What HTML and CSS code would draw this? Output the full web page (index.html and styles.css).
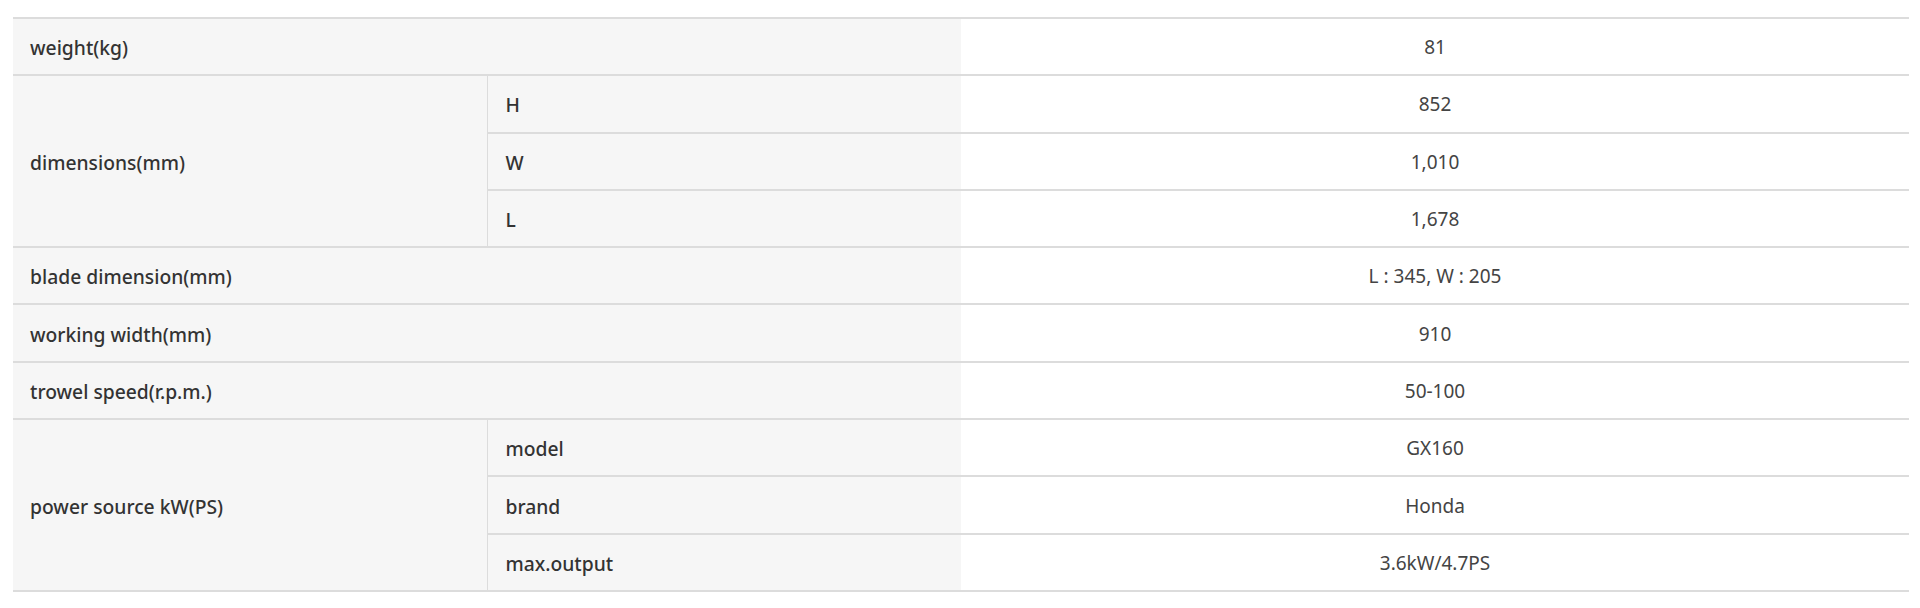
FILE: index.html
```html
<!DOCTYPE html>
<html lang="en">
<head>
<meta charset="utf-8">
<title>Specifications</title>
<link rel="stylesheet" href="styles.css">
</head>
<body>
<div class="spec-wrap">
  <table class="spec">
    <colgroup>
      <col class="c"><col class="c"><col class="c"><col class="c">
    </colgroup>
    <tbody>
      <tr>
        <th class="lbl" colspan="2">weight(kg)</th>
        <td class="val" colspan="2">81</td>
      </tr>
      <tr>
        <th class="lbl" rowspan="3">dimensions(mm)</th>
        <th class="sub">H</th>
        <td class="val" colspan="2">852</td>
      </tr>
      <tr>
        <th class="sub">W</th>
        <td class="val" colspan="2">1,010</td>
      </tr>
      <tr>
        <th class="sub">L</th>
        <td class="val" colspan="2">1,678</td>
      </tr>
      <tr>
        <th class="lbl" colspan="2">blade dimension(mm)</th>
        <td class="val" colspan="2">L : 345, W : 205</td>
      </tr>
      <tr>
        <th class="lbl" colspan="2">working width(mm)</th>
        <td class="val" colspan="2">910</td>
      </tr>
      <tr>
        <th class="lbl" colspan="2">trowel speed(r.p.m.)</th>
        <td class="val" colspan="2">50-100</td>
      </tr>
      <tr>
        <th class="lbl" rowspan="3">power source kW(PS)</th>
        <th class="sub">model</th>
        <td class="val" colspan="2">GX160</td>
      </tr>
      <tr>
        <th class="sub">brand</th>
        <td class="val" colspan="2">Honda</td>
      </tr>
      <tr>
        <th class="sub">max.output</th>
        <td class="val" colspan="2">3.6kW/4.7PS</td>
      </tr>
    </tbody>
  </table>
</div>
</body>
</html>
```

FILE: styles.css
```css
html, body {
  margin: 0;
  padding: 0;
  background: #ffffff;
}

body {
  font-family: "Noto Sans", "Open Sans", "Liberation Sans", sans-serif;
  color: #333333;
}

.spec-wrap {
  padding: 17px 11px 0 13px;
}

.spec {
  width: 100%;
  table-layout: fixed;
  border-collapse: collapse;
  border-top: 2px solid #dcdcdc;
}

.spec .c {
  width: 25%;
}

.spec tr {
  border-bottom: 2px solid #dcdcdc;
}

.spec th,
.spec td {
  height: 53.3px;
  padding: 2px 17px 0;
  font-size: 19px;
  line-height: 27px;
  text-align: left;
  vertical-align: middle;
}

.lbl {
  background: #f6f6f6;
  font-weight: 500;
  color: #333333;
}

.spec th.lbl,
.spec th.sub {
  font-size: 19.3px;
}

.sub {
  background: #f6f6f6;
  font-weight: 500;
  color: #333333;
  border-left: 1px solid #dcdcdc;
}

.spec th.sub {
  padding-left: 18px;
}

.spec td.val {
  background: #ffffff;
  text-align: center;
  font-weight: 400;
  color: #444444;
}
```
